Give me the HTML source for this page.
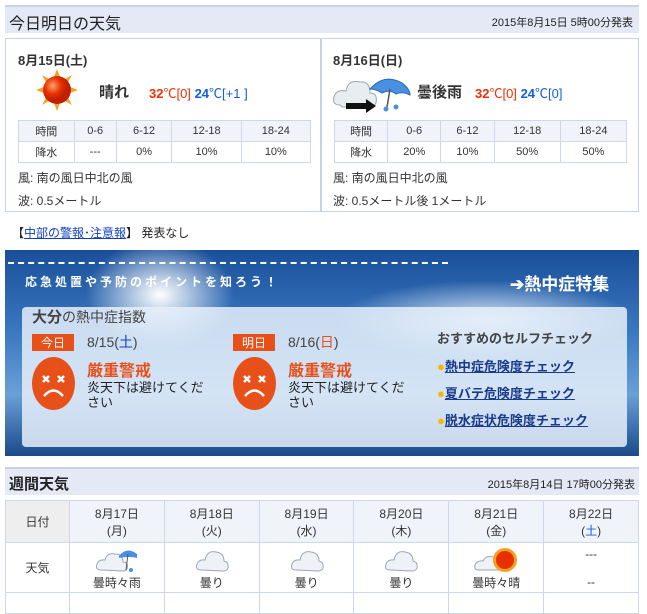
<!DOCTYPE html>
<html><head><meta charset="utf-8"><style>
body{margin:0;width:647px;height:597px;overflow:hidden;background:#fff;font-family:"Liberation Sans","Noto Sans CJK JP",sans-serif;color:#333;font-size:12px}
.abs{position:absolute}
.hdr{position:absolute;left:5px;width:634px;background:#e4e9f5;border-top:2px solid #c9d3e8}
.panel{position:absolute;top:38px;height:174px;border:1px solid #c6d1ea;box-sizing:border-box;background:#fff}
table.t{border-collapse:collapse;position:absolute;font-size:11px}
table.t td{border:1px solid #cfd7ea;text-align:center;height:18px;color:#333}
table.t tr:first-child td{background:#f0f3fa}
.red{color:#f03000}.blue{color:#1060e0}
.ic{display:block;margin:0 auto}
</style></head><body>
<div class="hdr" style="top:5px;height:26px"><span class="abs" style="left:4px;top:3px;font-size:16px;color:#222">今日明日の天気</span><span class="abs" style="right:6px;top:7px;font-size:11px;color:#222">2015年8月15日 5時00分発表</span></div>

<div class="panel" style="left:5px;width:316px">
<div class="abs" style="left:12px;top:11px;font-weight:bold;font-size:13px">8月15日(土)</div>
<svg class="abs" style="left:30px;top:30px" width="42" height="42" viewBox="0 0 42 42"><g fill="#f4a020"><polygon points="21,0 24,8 18,8"/><polygon points="21,42 24,34 18,34"/><polygon points="0,21 8,18 8,24"/><polygon points="42,21 34,18 34,24"/><polygon points="6,6 13,10 10,13"/><polygon points="36,6 29,10 32,13"/><polygon points="6,36 13,32 10,29"/><polygon points="36,36 29,32 32,29"/></g><defs><radialGradient id="sg" cx="35%" cy="35%"><stop offset="0" stop-color="#ffa070"/><stop offset=".6" stop-color="#e83000"/><stop offset="1" stop-color="#c02000"/></radialGradient></defs><circle cx="21" cy="21" r="14" fill="url(#sg)"/></svg>
<div class="abs" style="left:93px;top:42px;font-size:15px;font-weight:bold">晴れ</div>
<div class="abs" style="left:143px;top:44px;font-size:13px"><span class="red"><b>32</b>℃[0]</span> <span class="blue"><b>24</b>℃[+1 ]</span></div>
<table class="t" style="left:12px;top:81px;width:293px"><tr><td>時間</td><td>0-6</td><td>6-12</td><td>12-18</td><td>18-24</td></tr><tr><td>降水</td><td>---</td><td>0%</td><td>10%</td><td>10%</td></tr></table>
<div class="abs" style="left:12px;top:130px">風: 南の風日中北の風</div>
<div class="abs" style="left:12px;top:153px">波: 0.5メートル</div>
</div>

<div class="panel" style="left:321px;width:318px">
<div class="abs" style="left:11px;top:11px;font-weight:bold;font-size:13px">8月16日(日)</div>
<svg class="abs" style="left:10px;top:30px" width="80" height="44" viewBox="0 0 80 44"><path d="M8 36 Q0 36 2 28 Q4 20 14 22 Q16 10 28 13 Q38 12 38 24 Q46 24 44 34 Q42 38 36 38 L10 38Z" fill="#e8edf2" stroke="#9aa6b2"/><path d="M38 20 Q52 4 70 14 Q78 20 78 26 Q70 22 64 25 Q58 20 50 24 Q44 20 38 20Z" fill="#4a90e0" stroke="#2a6ab0"/><line x1="58" y1="20" x2="55" y2="38" stroke="#555" stroke-width="1.5"/><path d="M14 34 L34 34 L34 30 L44 37 L34 44 L34 40 L14 40Z" fill="#111"/><circle cx="54" cy="40" r="2.5" fill="#4a90e0"/><circle cx="64" cy="38" r="2.5" fill="#4a90e0"/></svg>
<div class="abs" style="left:95px;top:42px;font-size:15px;font-weight:bold">曇後雨</div>
<div class="abs" style="left:153px;top:44px;font-size:13px"><span class="red"><b>32</b>℃[0]</span> <span class="blue"><b>24</b>℃[0]</span></div>
<table class="t" style="left:12px;top:81px;width:293px"><tr><td>時間</td><td>0-6</td><td>6-12</td><td>12-18</td><td>18-24</td></tr><tr><td>降水</td><td>20%</td><td>10%</td><td>50%</td><td>50%</td></tr></table>
<div class="abs" style="left:11px;top:130px">風: 南の風日中北の風</div>
<div class="abs" style="left:11px;top:153px">波: 0.5メートル後 1メートル</div>
</div>

<div class="abs" style="left:12px;top:224px;color:#222">【<span style="color:#1040c0;text-decoration:underline">中部の警報･注意報</span>】 発表なし</div>

<div class="abs" style="left:5px;top:250px;width:634px;height:206px;background:linear-gradient(180deg,#1a4f9a,#3a78c0 40%,#6aa0d8 70%,#1a4a8a);overflow:hidden">
<div class="abs" style="left:80px;top:-10px;width:150px;height:110px;border-radius:50%;background:radial-gradient(#fff,rgba(255,255,255,0) 70%)"></div>
<div class="abs" style="left:330px;top:30px;width:300px;height:80px;border-radius:50%;background:radial-gradient(rgba(255,255,255,.8),rgba(255,255,255,0) 70%)"></div>
<div class="abs" style="left:3px;top:12px;width:440px;border-top:2px dashed #fff"></div>
<div class="abs" style="left:20px;top:23px;color:#fff;font-weight:bold;font-size:12px;letter-spacing:3px">応急処置や予防のポイントを知ろう！</div>
<div class="abs" style="left:505px;top:20px;color:#fff;font-weight:bold;font-size:17px">➔熱中症特集</div>
<div class="abs" style="left:17px;top:57px;width:605px;height:140px;background:rgba(230,240,250,0.85);border-radius:4px"></div>
<div class="abs" style="left:27px;top:56px;font-size:14px;color:#444"><b style="font-size:15px">大分</b>の熱中症指数</div>
<div class="abs" style="left:27px;top:84px;width:42px;height:17px;background:#e8501a;color:#fff;text-align:center;font-size:12px">今日</div>
<div class="abs" style="left:82px;top:82px;font-size:14px;color:#444">8/15(<span style="color:#1040c0">土</span>)</div>
<svg class="abs" style="left:27px;top:107px" width="43" height="53" viewBox="0 0 43 53"><ellipse cx="21.5" cy="26.5" rx="21.5" ry="26.5" fill="#e8501a"/><path d="M11 19l6 6M17 19l-6 6M26 19l6 6M32 19l-6 6" stroke="#fff" stroke-width="2.5"/><path d="M12 39 Q21.5 28 31 39" fill="none" stroke="#fff" stroke-width="2.5"/></svg>
<div class="abs" style="left:82px;top:107px;font-size:16px;color:#e8501a;font-weight:bold">厳重警戒</div>
<div class="abs" style="left:82px;top:130px;width:120px;font-size:13px;color:#222;line-height:15px">炎天下は避けてください</div>
<div class="abs" style="left:228px;top:84px;width:42px;height:17px;background:#e8501a;color:#fff;text-align:center;font-size:12px">明日</div>
<div class="abs" style="left:283px;top:82px;font-size:14px;color:#444">8/16(<span style="color:#e8501a">日</span>)</div>
<svg class="abs" style="left:228px;top:107px" width="43" height="53" viewBox="0 0 43 53"><ellipse cx="21.5" cy="26.5" rx="21.5" ry="26.5" fill="#e8501a"/><path d="M11 19l6 6M17 19l-6 6M26 19l6 6M32 19l-6 6" stroke="#fff" stroke-width="2.5"/><path d="M12 39 Q21.5 28 31 39" fill="none" stroke="#fff" stroke-width="2.5"/></svg>
<div class="abs" style="left:283px;top:107px;font-size:16px;color:#e8501a;font-weight:bold">厳重警戒</div>
<div class="abs" style="left:283px;top:130px;width:120px;font-size:13px;color:#222;line-height:15px">炎天下は避けてください</div>
<div class="abs" style="left:432px;top:78px;font-size:13px;font-weight:bold;color:#444">おすすめのセルフチェック</div>
<div class="abs" style="left:432px;top:103px;font-size:13px;font-weight:bold;color:#1a3a8a;line-height:27px"><span style="color:#f5b800">●</span><u>熱中症危険度チェック</u><br><span style="color:#f5b800">●</span><u>夏バテ危険度チェック</u><br><span style="color:#f5b800">●</span><u>脱水症状危険度チェック</u></div>
</div>

<div class="hdr" style="top:467px;height:26px"><span class="abs" style="left:4px;top:4px;font-size:15px;font-weight:bold;color:#222">週間天気</span><span class="abs" style="right:4px;top:7px;font-size:11px;color:#222">2015年8月14日 17時00分発表</span></div>

<table class="t" style="left:5px;top:500px;width:634px;font-size:12px;table-layout:fixed">
<colgroup><col style="width:64px"><col><col><col><col><col><col></colgroup>
<tr style="height:42px"><td style="background:#eee">日付</td><td>8月17日<br>(月)</td><td>8月18日<br>(火)</td><td>8月19日<br>(水)</td><td>8月20日<br>(木)</td><td>8月21日<br>(金)</td><td>8月22日<br>(<span class="blue">土</span>)</td></tr>
<tr style="height:50px">
<td style="background:#fff">天気</td>
<td style="background:#fff"><svg class="ic" width="44" height="30" viewBox="0 0 44 30"><path d="M6 26 Q0 26 2 20 Q4 15 10 16 Q12 8 20 10 Q28 10 28 18 Q34 18 32 25 Q31 27 28 27Z" fill="#eef2f6" stroke="#9aa6b2"/><path d="M24 12 Q32 2 42 10 L42 14 Q36 12 24 14Z" fill="#4a90e0"/><line x1="33" y1="10" x2="31" y2="26" stroke="#555"/><circle cx="36" cy="26" r="2" fill="#4a90e0"/></svg>曇時々雨</td>
<td style="background:#fff"><svg class="ic" width="34" height="30" viewBox="0 0 34 30"><path d="M6 26 Q0 26 2 20 Q4 15 10 16 Q12 6 21 8 Q29 9 29 17 Q34 18 33 24 Q32 27 28 27Z" fill="#eef2f6" stroke="#9aa6b2"/></svg>曇り</td>
<td style="background:#fff"><svg class="ic" width="34" height="30" viewBox="0 0 34 30"><path d="M6 26 Q0 26 2 20 Q4 15 10 16 Q12 6 21 8 Q29 9 29 17 Q34 18 33 24 Q32 27 28 27Z" fill="#eef2f6" stroke="#9aa6b2"/></svg>曇り</td>
<td style="background:#fff"><svg class="ic" width="34" height="30" viewBox="0 0 34 30"><path d="M6 26 Q0 26 2 20 Q4 15 10 16 Q12 6 21 8 Q29 9 29 17 Q34 18 33 24 Q32 27 28 27Z" fill="#eef2f6" stroke="#9aa6b2"/></svg>曇り</td>
<td style="background:#fff"><svg class="ic" width="44" height="30" viewBox="0 0 44 30"><path d="M4 26 Q0 26 1 21 Q3 16 9 17 Q12 11 19 13 Q25 14 25 20 Q28 22 26 26Z" fill="#eef2f6" stroke="#9aa6b2"/><circle cx="31" cy="16" r="12" fill="#f4a020"/><circle cx="31" cy="16" r="9" fill="#e83000"/></svg>曇時々晴</td>
<td style="background:#fff">---<br><br>--</td></tr>
<tr><td></td><td></td><td></td><td></td><td></td><td></td><td></td></tr>
</table>
</body></html>
